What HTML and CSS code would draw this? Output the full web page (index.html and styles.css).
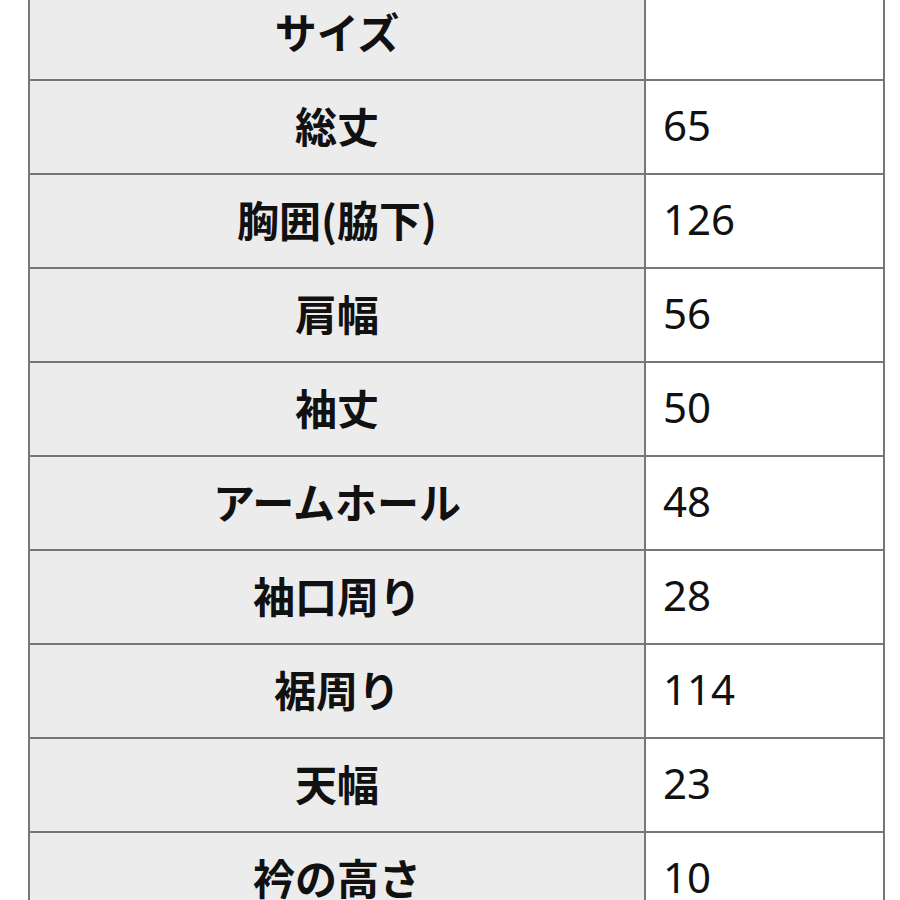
FILE: index.html
```
<!DOCTYPE html>
<html lang="ja">
<head>
<meta charset="utf-8">
<link rel="stylesheet" href="styles.css">
</head>
<body>
<table class="size-table">
<tr><th>サイズ</th><td></td></tr>
<tr><th>総丈</th><td>65</td></tr>
<tr><th>胸囲(脇下)</th><td>126</td></tr>
<tr><th>肩幅</th><td>56</td></tr>
<tr><th>袖丈</th><td>50</td></tr>
<tr><th>アームホール</th><td>48</td></tr>
<tr><th>袖口周り</th><td>28</td></tr>
<tr><th>裾周り</th><td>114</td></tr>
<tr><th>天幅</th><td>23</td></tr>
<tr><th>衿の高さ</th><td>10</td></tr>
</table>
</body>
</html>
```
FILE: styles.css
```
html, body {
  margin: 0;
  padding: 0;
  background: #ffffff;
  overflow: hidden;
}
.size-table {
  margin: -15px 0 0 28px;
  border-collapse: collapse;
  width: 857px;
  table-layout: fixed;
}
.size-table th,
.size-table td {
  border: 2px solid #777777;
  height: 94px;
  padding: 0 0 6px 0;
  box-sizing: border-box;
}
.size-table th {
  width: 616px;
  background: #ececec;
  font-family: "Noto Sans CJK JP", "Noto Sans", sans-serif;
  font-weight: 700;
  font-size: 42px;
  text-align: center;
  color: #111;
}
.size-table td {
  background: #ffffff;
  font-family: "Noto Sans", "Noto Sans CJK JP", sans-serif;
  font-size: 42px;
  text-align: left;
  padding-left: 17px;
  color: #111;
}
```
